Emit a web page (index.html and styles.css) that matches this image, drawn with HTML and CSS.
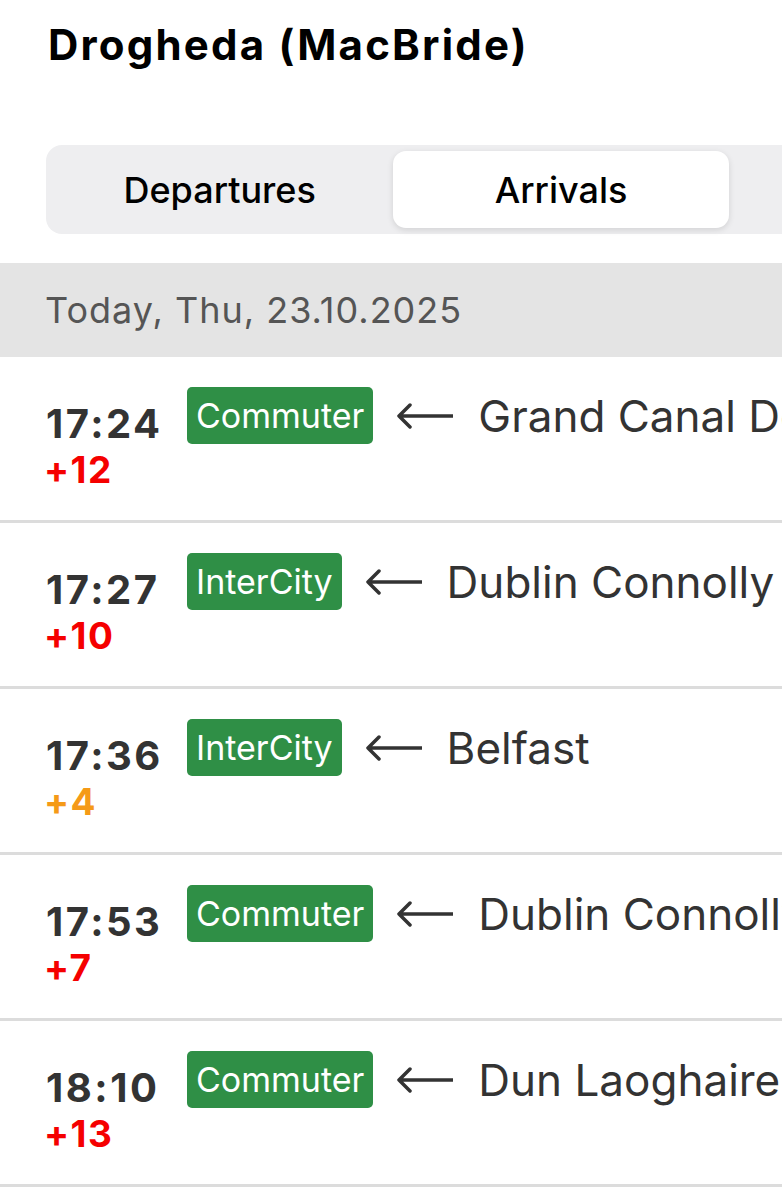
FILE: index.html
```html
<!DOCTYPE html>
<html lang="en">
<head>
<meta charset="utf-8">
<title>Drogheda (MacBride)</title>
<link rel="stylesheet" href="styles.css">
</head>
<body>
<div class="page">
  <header class="header">
    <h1 class="title">Drogheda (MacBride)</h1>
  </header>
  <div class="segments">
    <div class="segment">Departures</div>
    <div class="segment selected">Arrivals</div>
    <div class="segment"></div>
  </div>
  <div class="date-band">Today, Thu, 23.10.2025</div>
  <ul class="list">
    <li class="row">
      <div class="times"><div class="time">17:24</div><div class="delay late">+12</div></div>
      <div class="info"><span class="badge">Commuter</span><svg class="arrow" viewBox="0 0 57 26" width="57" height="26"><path d="M14 2 L3 13 L14 24 M3 13 H57"/></svg><span class="dest">Grand Canal Dock</span></div>
    </li>
    <li class="row">
      <div class="times"><div class="time">17:27</div><div class="delay late">+10</div></div>
      <div class="info"><span class="badge">InterCity</span><svg class="arrow" viewBox="0 0 57 26" width="57" height="26"><path d="M14 2 L3 13 L14 24 M3 13 H57"/></svg><span class="dest">Dublin Connolly</span></div>
    </li>
    <li class="row">
      <div class="times"><div class="time">17:36</div><div class="delay minor">+4</div></div>
      <div class="info"><span class="badge">InterCity</span><svg class="arrow" viewBox="0 0 57 26" width="57" height="26"><path d="M14 2 L3 13 L14 24 M3 13 H57"/></svg><span class="dest">Belfast</span></div>
    </li>
    <li class="row">
      <div class="times"><div class="time">17:53</div><div class="delay late">+7</div></div>
      <div class="info"><span class="badge">Commuter</span><svg class="arrow" viewBox="0 0 57 26" width="57" height="26"><path d="M14 2 L3 13 L14 24 M3 13 H57"/></svg><span class="dest">Dublin Connolly</span></div>
    </li>
    <li class="row">
      <div class="times"><div class="time">18:10</div><div class="delay late">+13</div></div>
      <div class="info"><span class="badge">Commuter</span><svg class="arrow" viewBox="0 0 57 26" width="57" height="26"><path d="M14 2 L3 13 L14 24 M3 13 H57"/></svg><span class="dest">Dun Laoghaire</span></div>
    </li>
  </ul>
</div>
</body>
</html>
```
FILE: styles.css
```css
html, body {
  margin: 0;
  padding: 0;
  background: #ffffff;
}
body {
  font-family: Inter, "Liberation Sans", sans-serif;
  color: #000;
  overflow-x: hidden;
}
.page {
  width: 782px;
  overflow: hidden;
}
.header {
  padding: 20px 0 0 48px;
}
.title {
  margin: 0;
  font-size: 42px;
  line-height: 50px;
  font-weight: 700;
  letter-spacing: 2.2px;
  color: #000;
  white-space: nowrap;
}
.segments {
  margin: 75px 0 0 46px;
  width: 1030px;
  height: 89px;
  box-sizing: border-box;
  padding: 6px;
  display: flex;
  gap: 6px;
  background: #eeeef0;
  border-radius: 16px;
}
.segment {
  flex: 1;
  display: flex;
  align-items: center;
  justify-content: center;
  font-size: 36px;
  font-weight: 500;
  color: #000;
  border-radius: 13px;
}
.segment.selected {
  background: #fff;
  box-shadow: 0 2px 6px rgba(0, 0, 0, 0.12);
}
.date-band {
  margin-top: 29px;
  height: 94px;
  line-height: 94px;
  padding-left: 45px;
  background: #e4e4e4;
  color: #555;
  font-size: 36px;
  letter-spacing: 1px;
  white-space: nowrap;
}
.list {
  list-style: none;
  margin: 0;
  padding: 0;
}
.row {
  height: 133px;
  border-bottom: 3px solid #dcdcdc;
  display: flex;
  align-items: flex-start;
  padding: 30px 0 0 46px;
  white-space: nowrap;
}
.times {
  width: 141px;
  flex: none;
  padding-top: 14px;
}
.time {
  font-size: 40px;
  line-height: 45px;
  font-weight: 700;
  letter-spacing: 2.5px;
  color: #333;
}
.delay {
  font-size: 37px;
  line-height: 47px;
  font-weight: 700;
  letter-spacing: 1.5px;
  margin-left: -2px;
}
.delay.late { color: #f50000; }
.delay.minor { color: #f59a17; }
.info {
  display: flex;
  align-items: center;
  height: 57px;
}
.badge {
  height: 57px;
  line-height: 57px;
  padding: 0 9px;
  background: #2f8f46;
  color: #fff;
  font-size: 34px;
  border-radius: 5px;
}
.arrow {
  margin-left: 23px;
  fill: none;
  stroke: #333;
  stroke-width: 3.5;
  stroke-linecap: round;
  stroke-linejoin: round;
}
.dest {
  margin-left: 25px;
  font-size: 44px;
  color: #333;
}
```
